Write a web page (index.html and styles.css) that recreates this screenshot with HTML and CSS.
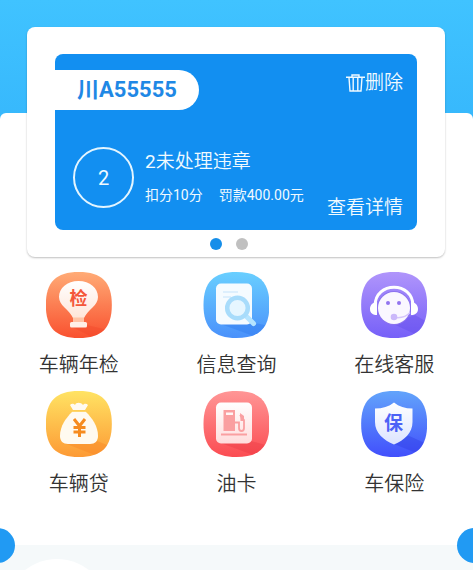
FILE: index.html
```
<!DOCTYPE html>
<html lang="zh-CN">
<head>
  <meta charset="UTF-8">
  <meta name="viewport" content="width=device-width, initial-scale=1.0">
  <title>车辆服务</title>
  <link rel="stylesheet" href="styles.css">
</head>
<body>

<main class="page">
  <section class="card">
    <div class="car">
      <div class="car-top">
        <h2 class="plate">川A55555</h2>
        <button type="button" class="delete">
          <svg width="19" height="19" viewBox="0 0 19 19" fill="none" stroke="currentColor" stroke-width="1.4">
            <path d="M0 3.200h19M6 3V1h7v2M3 3.500l1 13.500h11l1-13.500M7.200 4v12.500M11.800 4v12.500"/>
          </svg>删除
        </button>
      </div>
      <div class="car-bottom">
        <div class="count">2</div>
        <div class="info">
          <h3><span class="number">2</span>未处理违章</h3>
          <p><span>扣分10分</span><span>罚款400.00元</span></p>
        </div>
        <a href="#detail" class="detail">查看详情</a>
      </div>
    </div>
    <div class="dots">
      <button type="button" class="dot active" aria-label="1"></button>
      <button type="button" class="dot" aria-label="2"></button>
    </div>
  </section>

  <section class="sheet">
    <nav class="menu">
      <a href="#check" class="item">
        <svg class="icon" viewBox="0 0 66 66">
          <defs>
            <linearGradient id="orange" x2="0" y2="1"><stop offset="0" stop-color="#ffab76"/><stop offset="1" stop-color="#f9512f"/></linearGradient>
            <linearGradient id="cream" x2="0" y2="1"><stop offset="0" stop-color="#fff"/><stop offset="1" stop-color="#ffe3d4"/></linearGradient>
          </defs>
          <path fill="url(#orange)" d="M0 0h66v66H0z"/>
          <path fill="#ef3f25" opacity=".3" d="M26 55l15-2 25 6v7H48z"/>
          <path fill="url(#cream)" d="M32.500 9C44 9 52 16 52 25c0 9-10 12-14 21v4H27v-4C23 37 13 34 13 25c0-9 8-16 19.500-16z"/>
          <path fill="#ffc4a6" d="M27 45.500h11V50H27z"/>
          <rect x="24" y="50" width="17" height="5.500" rx="1.500" fill="#fff0e7"/>
          <text x="32.500" y="33" font-size="18" fill="#f4573a" class="glyph">检</text>
        </svg>
        <span>车辆年检</span>
      </a>
      <a href="#query" class="item">
        <svg class="icon" viewBox="0 0 66 66">
          <defs>
            <linearGradient id="sky" x2="0" y2="1"><stop offset="0" stop-color="#69cfff"/><stop offset="1" stop-color="#4a91fb"/></linearGradient>
          </defs>
          <path fill="url(#sky)" d="M0 0h66v66H0z"/>
          <path fill="#2c78ee" opacity=".4" d="M15 51l33-1 18 4v12H56z"/>
          <rect x="13" y="11.500" width="36" height="41" rx="5" fill="#f5fbff"/>
          <path d="M20 20h15M20 25h8" stroke="#d5ecfd" stroke-width="1.500"/>
          <path d="M43 44l7.500 7.500" stroke="#b5e4ff" stroke-width="5" stroke-linecap="round"/>
          <circle cx="34.500" cy="36" r="10.300" fill="#e6f6ff" stroke="#a8dcfb" stroke-width="4.500"/>
        </svg>
        <span>信息查询</span>
      </a>
      <a href="#service" class="item">
        <svg class="icon" viewBox="0 0 66 66">
          <defs>
            <linearGradient id="violet" x2="0" y2="1"><stop offset="0" stop-color="#b095fb"/><stop offset="1" stop-color="#7660f8"/></linearGradient>
          </defs>
          <path fill="url(#violet)" d="M0 0h66v66H0z"/>
          <path fill="#5f48e8" opacity=".35" d="M30 51l24-8 12 7v14l-12-2z"/>
          <path d="M14 34C14 9 52 9 52 34" fill="none" stroke="#fff" stroke-width="3"/>
          <path fill="#fff" d="M16 30c-4 0-7 3-7 7s3 6 7 6zM50 30c4 0 7 3 7 7s-3 6-7 6z"/>
          <circle cx="33" cy="36" r="17" fill="#8c72ef"/>
          <circle cx="33" cy="36" r="16" fill="#faf7ff"/>
          <circle cx="27" cy="31" r="2" fill="#9274ef"/>
          <circle cx="38" cy="31" r="2" fill="#9274ef"/>
          <path d="M34 45.500q10 1 15-5" fill="none" stroke="#d5c5fb" stroke-width="1.500"/>
          <circle cx="33" cy="45" r="3.300" fill="#cbb8fa"/>
        </svg>
        <span>在线客服</span>
      </a>
      <a href="#loan" class="item">
        <svg class="icon" viewBox="0 0 66 66">
          <defs>
            <linearGradient id="gold" x2="0" y2="1"><stop offset="0" stop-color="#ffe363"/><stop offset="1" stop-color="#fd9a35"/></linearGradient>
          </defs>
          <path fill="url(#gold)" d="M0 0h66v66H0z"/>
          <path fill="#f57f20" opacity=".35" d="M18 52l33-2 15 6v10H54z"/>
          <path fill="#fffaf0" d="M27 19l-3-5c2-2 4-1 5 0 1-3 6-3 8 0 1-1 3-2 5 0l-3 5z"/>
          <path fill="#fffaf0" d="M26 21h14c6 6 12 14 12 24 0 5-3 8-8 8H22c-5 0-8-3-8-8 0-10 6-18 12-24z"/>
          <path d="M26 20.500h14" stroke="#ffd66a" stroke-width="1.200"/>
          <path d="M28 28l5.500 7 5.500-7M27.500 36.500h12M27.500 41h12M33.500 35v11" fill="none" stroke="#f68b1f" stroke-width="3"/>
        </svg>
        <span>车辆贷</span>
      </a>
      <a href="#fuel" class="item">
        <svg class="icon" viewBox="0 0 66 66">
          <defs>
            <linearGradient id="red" x2="0" y2="1"><stop offset="0" stop-color="#ff9696"/><stop offset="1" stop-color="#fb4c52"/></linearGradient>
            <linearGradient id="blush" x2="0" y2="1"><stop offset="0" stop-color="#fff"/><stop offset="1" stop-color="#ffdcdc"/></linearGradient>
          </defs>
          <path fill="url(#red)" d="M0 0h66v66H0z"/>
          <path fill="#e8353f" opacity=".35" d="M15 51l33-1 18 5v11H56z"/>
          <rect x="13" y="11.500" width="36" height="41" rx="5" fill="url(#blush)"/>
          <path fill="#fa9fa1" fill-rule="evenodd" d="M20.500 19H32v21H20.500zM23 21.500h7V24h-7z"/>
          <path d="M32 31.500h4V37q0 3 2.500 3t2.500-3v-8l-4-5" fill="none" stroke="#fa9fa1" stroke-width="1.800"/>
          <path fill="#fa9fa1" d="M37 22l4 3v5h-3.500z"/>
          <path d="M18 43.500h26" stroke="#fa9fa1" stroke-width="1.800"/>
        </svg>
        <span>油卡</span>
      </a>
      <a href="#insurance" class="item">
        <svg class="icon" viewBox="0 0 66 66">
          <defs>
            <linearGradient id="blue" x2="0" y2="1"><stop offset="0" stop-color="#62a4fb"/><stop offset="1" stop-color="#414ffc"/></linearGradient>
            <linearGradient id="ice" x2="0" y2="1"><stop offset="0" stop-color="#fff"/><stop offset="1" stop-color="#dce4ff"/></linearGradient>
          </defs>
          <path fill="url(#blue)" d="M0 0h66v66H0z"/>
          <path fill="#2a36df" opacity=".35" d="M33 53l13-9 20 9v13l-8-3z"/>
          <path fill="url(#ice)" d="M33 11.500c5 4 11 6 18.500 6V31c0 11-8 18-18.500 22.500C22.500 49 14 42 14 31V17.500c7.500 0 14-2 19-6z"/>
          <text x="32.500" y="39" font-size="19" fill="#4c62f6" class="glyph">保</text>
        </svg>
        <span>车保险</span>
      </a>
    </nav>
    <button type="button" class="knob knob-left" aria-label="上一页"></button>
    <button type="button" class="knob knob-right" aria-label="下一页"></button>
  </section>

  <section class="feed">
    <div class="avatar"></div>
  </section>
</main>

</body>
</html>
```
FILE: styles.css
```
* {
  box-sizing: border-box;
}
body {
  margin: 0;
  font-family: Roboto, "Noto Sans CJK SC", sans-serif;
  color: #333;
}
h2, h3, p {
  margin: 0;
}
a {
  color: inherit;
  text-decoration: none;
}
button {
  padding: 0;
  border: none;
  background: none;
  color: inherit;
  font-family: inherit;
  cursor: pointer;
}
.page {
  display: flex;
  flex-direction: column;
  height: 100vh;
  overflow: hidden;
  background: linear-gradient(#40c3ff, #37b8fc 120px);
}
.card {
  position: relative;
  z-index: 1;
  flex: none;
  margin: 27px 28px 0 27px;
  padding: 27px 28px 0;
  background: #fff;
  border-radius: 8px;
  box-shadow: 0 1px 2px rgba(0, 0, 0, 0.25);
}
.car {
  padding: 16px 14px 10px 0;
  background: #128ff1;
  border-radius: 8px;
  color: #f0faff;
  white-space: nowrap;
}
.car-top {
  display: flex;
  justify-content: space-between;
  align-items: flex-start;
}
.plate {
  padding: 0 22px;
  background: #fff;
  border-radius: 0 20px 20px 0;
  color: #1f88e5;
  font-size: 22px;
  line-height: 40px;
}
.delete {
  display: flex;
  align-items: center;
  font-size: 19px;
  font-weight: 350;
  line-height: 26px;
}
.car-bottom {
  display: flex;
  gap: 11px;
  min-height: 73px;
  margin-top: 37px;
  padding-left: 18px;
}
.count {
  width: 61px;
  height: 61px;
  border: 2px solid #e3f5ff;
  border-radius: 50%;
  font-size: 20px;
  line-height: 58px;
  text-align: center;
}
.info {
  flex: 1;
}
.info h3 {
  font-size: 19px;
  font-weight: 350;
  line-height: 30px;
}
.number {
  font-weight: 400;
}
.info p {
  display: flex;
  gap: 16px;
  margin-top: 6px;
  font-size: 14px;
  line-height: 24px;
}
.detail {
  align-self: flex-end;
  font-size: 19px;
  font-weight: 350;
  line-height: 24px;
}
.dots {
  display: flex;
  justify-content: center;
  padding: 8px 0 7px;
}
.dot {
  width: 12px;
  height: 12px;
  margin-right: 14px;
  border-radius: 50%;
  background: #c0c0c0;
}
.dot.active {
  background: #168ee9;
}

/* the sheet slides under the card */
.sheet {
  position: relative;
  flex: none;
  margin-top: -144px;
  padding: 159px 0 46px;
  background: #fff;
  border-radius: 6px 6px 0 0;
}
.menu {
  display: grid;
  grid-template-columns: repeat(3, 1fr);
  row-gap: 11px;
}
.item {
  display: flex;
  flex-direction: column;
  align-items: center;
  gap: 12px;
  font-size: 20px;
  font-weight: 350;
  line-height: 30px;
}
.icon {
  width: 66px;
  height: 66px;
  clip-path: path("M33 0C56 0 66 10 66 33S56 66 33 66 0 56 0 33 10 0 33 0z");
}
.glyph {
  font-weight: bold;
  text-anchor: middle;
}
.knob {
  position: absolute;
  bottom: -18px;
  width: 35px;
  height: 35px;
  border-radius: 50%;
  background: #219af3;
  z-index: 1;
}
.knob-left {
  left: -20px;
}
.knob-right {
  right: -19px;
}
.feed {
  flex: 1;
  min-height: 0;
  padding: 14px 5px;
  background: #f5f9fa;
}
.avatar {
  width: 104px;
  height: 104px;
  border-radius: 50%;
  background: #fff;
}
```
